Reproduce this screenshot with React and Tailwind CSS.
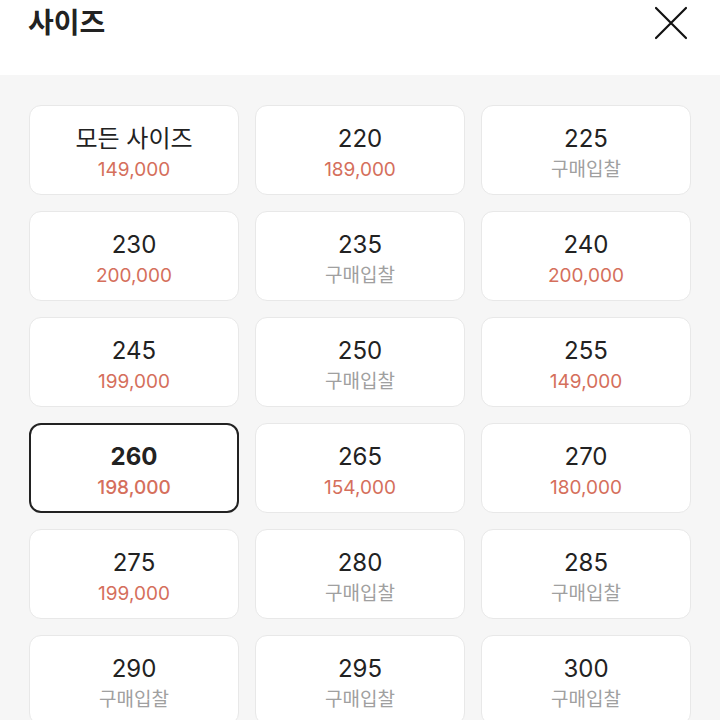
import React from 'react';

const sizes = [
  { label: '모든 사이즈', price: '149,000' },
  { label: '220', price: '189,000' },
  { label: '225', price: null },
  { label: '230', price: '200,000' },
  { label: '235', price: null },
  { label: '240', price: '200,000' },
  { label: '245', price: '199,000' },
  { label: '250', price: null },
  { label: '255', price: '149,000' },
  { label: '260', price: '198,000', selected: true },
  { label: '265', price: '154,000' },
  { label: '270', price: '180,000' },
  { label: '275', price: '199,000' },
  { label: '280', price: null },
  { label: '285', price: null },
  { label: '290', price: null },
  { label: '295', price: null },
  { label: '300', price: null },
];

const SizeCard = ({ label, price, selected }) => (
  <div
    className={`h-[90px] rounded-[12px] bg-white flex flex-col items-center justify-center ${
      selected ? 'border-2 border-[#222]' : 'border border-[#e8e8e8]'
    }`}
  >
    <div className={`text-[24px] leading-[30px] text-[#222] mt-[6px] ${selected ? 'font-bold' : ''}`}>{label}</div>
    {price ? (
      <div className={`text-[19px] leading-[26px] mt-[3px] text-[#d56f5c] ${selected ? 'font-medium' : ''}`}>{price}</div>
    ) : (
      <div className="text-[19px] leading-[26px] mt-[3px] text-[#a0a0a0]">구매입찰</div>
    )}
  </div>
);

export default function App() {
  return (
    <div
      className="w-[720px] h-[720px] overflow-hidden bg-[#f6f6f6]"
      style={{ fontFamily: 'Inter, "Noto Sans CJK KR", sans-serif' }}
    >
      <div className="h-[75px] bg-white flex items-start justify-between pl-[28px] pr-[32px]">
        <h1 className="text-[28px] font-bold text-[#222] leading-[44px] mt-[1px]">사이즈</h1>
        <svg width="34" height="34" viewBox="0 0 34 34" className="mt-[6px]" fill="none" stroke="#111" strokeWidth="2.2" strokeLinecap="round">
          <path d="M2 2 L32 32 M32 2 L2 32" />
        </svg>
      </div>
      <div className="grid grid-cols-3 gap-x-[16px] gap-y-[16px] px-[29px] pt-[30px]">
        {sizes.map((s, i) => (
          <SizeCard key={i} {...s} />
        ))}
      </div>
    </div>
  );
}
